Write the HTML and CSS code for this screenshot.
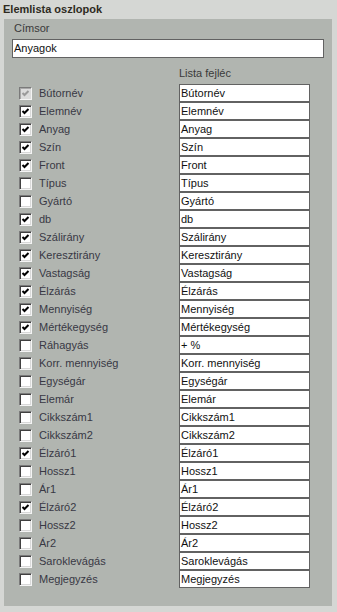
FILE: index.html
```html
<!DOCTYPE html>
<html lang="hu">
<head>
  <meta charset="UTF-8" />
  <title>Elemlista oszlopok</title>
  <link rel="stylesheet" href="styles.css">
</head>
<body>

  <div class="title">Elemlista oszlopok</div>

  <div class="panel">
    <div class="caption">Címsor</div>
    <div class="textbox wide">Anyagok</div>

    <div class="head-row">
      <span></span>
      <span class="head">Lista fejléc</span>
    </div>

    <div class="rows" id="rows"></div>
  </div>

  <script>
    const columns = [
      ["Bútornév", "Bútornév", "disabled"],
      ["Elemnév", "Elemnév", "on"],
      ["Anyag", "Anyag", "on"],
      ["Szín", "Szín", "on"],
      ["Front", "Front", "on"],
      ["Típus", "Típus", ""],
      ["Gyártó", "Gyártó", ""],
      ["db", "db", "on"],
      ["Szálirány", "Szálirány", "on"],
      ["Keresztirány", "Keresztirány", "on"],
      ["Vastagság", "Vastagság", "on"],
      ["Élzárás", "Élzárás", "on"],
      ["Mennyiség", "Mennyiség", "on"],
      ["Mértékegység", "Mértékegység", "on"],
      ["Ráhagyás", "+ %", ""],
      ["Korr. mennyiség", "Korr. mennyiség", ""],
      ["Egységár", "Egységár", ""],
      ["Elemár", "Elemár", ""],
      ["Cikkszám1", "Cikkszám1", ""],
      ["Cikkszám2", "Cikkszám2", ""],
      ["Élzáró1", "Élzáró1", "on"],
      ["Hossz1", "Hossz1", ""],
      ["Ár1", "Ár1", ""],
      ["Élzáró2", "Élzáró2", "on"],
      ["Hossz2", "Hossz2", ""],
      ["Ár2", "Ár2", ""],
      ["Saroklevágás", "Saroklevágás", ""],
      ["Megjegyzés", "Megjegyzés", ""]
    ];

    const tick = '<svg viewBox="0 0 9 9" width="9" height="9"><path d="M1.5 4 L3.5 6 L7.5 2" fill="none" stroke="currentColor" stroke-width="2"/></svg>';
    const rows = document.getElementById('rows');

    columns.forEach(([label, header, state]) => {
      const row = document.createElement('div');
      row.className = 'row';
      row.innerHTML =
        '<span class="check ' + state + '">' + (state ? tick : '') + '</span>' +
        '<span class="label">' + label + '</span>' +
        '<span class="textbox">' + header + '</span>';
      rows.appendChild(row);
    });
  </script>

</body>
</html>
```

FILE: styles.css
```css
body {
  margin: 0;
  background: #d5d7d4;
  font-family: 'Liberation Sans', Arial, sans-serif;
  font-size: 11px;
  color: #333;
  height: 612px;
  overflow: hidden;
}

.title {
  height: 19px;
  line-height: 18px;
  padding-left: 3px;
  font-weight: bold;
  font-size: 11px;
  color: #2e2b22;
}

.panel {
  margin: 0 5px 0 4px;
  height: 587px;
  background: #b1b5b0;
  box-sizing: border-box;
  padding-top: 3px;
}

.caption {
  padding-left: 10px;
  height: 17px;
  line-height: 13px;
  color: #3a3a3a;
}

.textbox {
  background: #fff;
  border: 1px solid #626262;
  box-sizing: border-box;
  color: #111;
  padding-left: 1px;
  line-height: 16px;
  white-space: nowrap;
  overflow: hidden;
}

.wide {
  margin-left: 8px;
  width: 312px;
  height: 19px;
  line-height: 17px;
}

.head-row {
  display: grid;
  grid-template-columns: 175px 131px;
  margin-top: 8px;
  height: 18px;
}

.head {
  line-height: 14px;
  color: #3a3a3a;
}

.rows {
  display: flex;
  flex-direction: column;
}

.row {
  display: grid;
  grid-template-columns: 13px 147px 131px;
  align-items: center;
  height: 18px;
  padding-left: 15px;
}

.row .textbox {
  height: 18px;
}

.label {
  padding-left: 7px;
  color: #383844;
  white-space: nowrap;
}

.check {
  width: 13px;
  height: 13px;
  box-sizing: border-box;
  background: #fff;
  border: 1px solid;
  border-color: #7a7a7a #f4f4f4 #f4f4f4 #7a7a7a;
  box-shadow: inset 1px 1px 0 #404040, inset -1px -1px 0 #d8d8d8;
  display: flex;
  align-items: center;
  justify-content: center;
  color: #000;
}

.check.disabled {
  background: #dcdcdc;
  color: #9a9a9a;
  box-shadow: inset 1px 1px 0 #a8a8a8;
}
```
